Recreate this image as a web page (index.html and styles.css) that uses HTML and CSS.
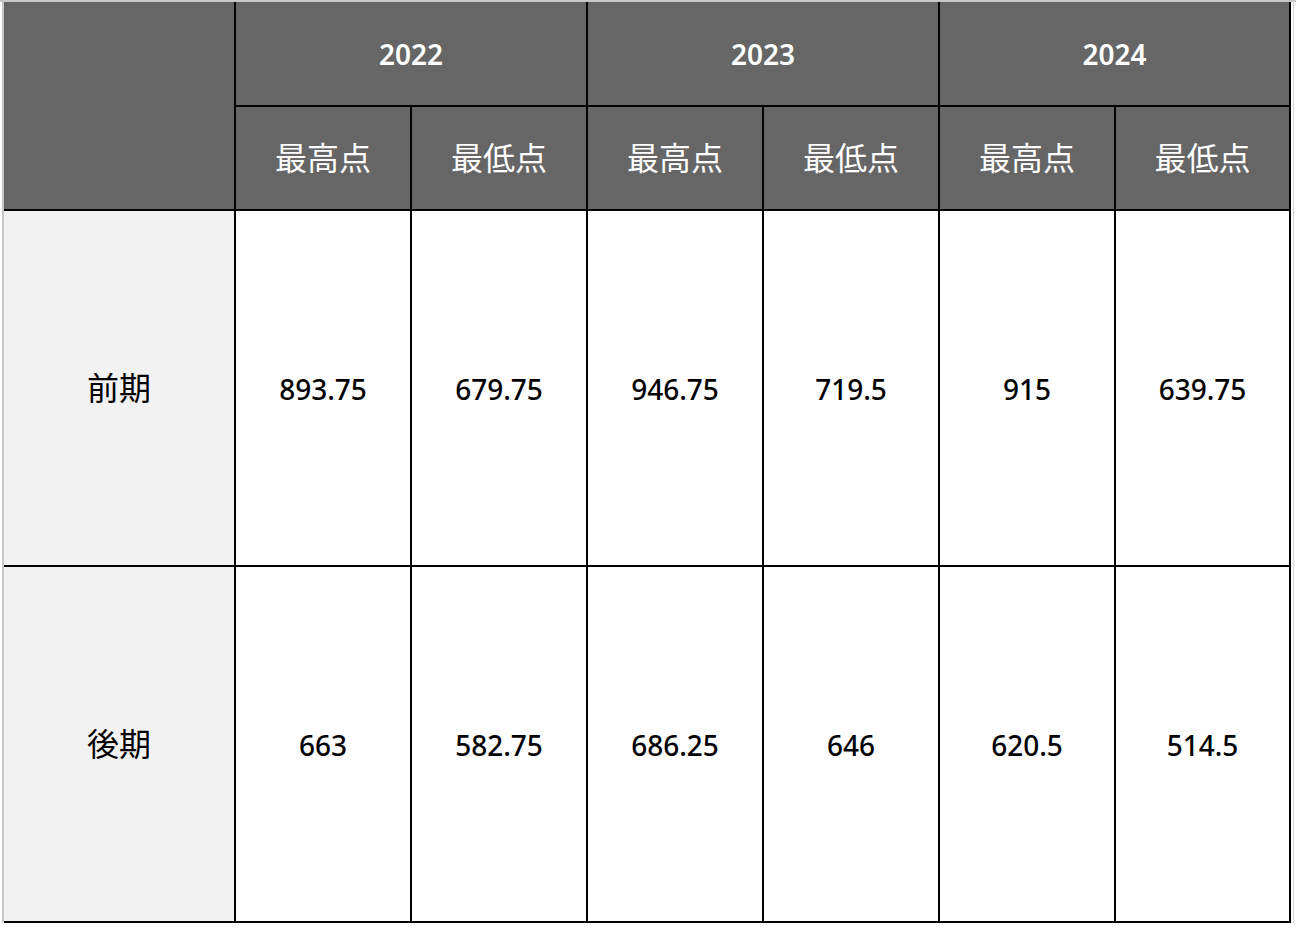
FILE: index.html
```html
<!DOCTYPE html>
<html lang="ja">
<head>
<meta charset="utf-8">
<title>最高点・最低点</title>
<link rel="stylesheet" href="styles.css">
</head>
<body>
<div class="sheet">
  <div class="frame">
    <div class="grid">
      <div class="cell head corner"></div>
      <div class="cell head year">2022</div>
      <div class="cell head year">2023</div>
      <div class="cell head year">2024</div>
      <div class="cell head sub cjk">最高点</div>
      <div class="cell head sub cjk">最低点</div>
      <div class="cell head sub cjk">最高点</div>
      <div class="cell head sub cjk">最低点</div>
      <div class="cell head sub cjk">最高点</div>
      <div class="cell head sub cjk">最低点</div>

      <div class="cell label cjk">前期</div>
      <div class="cell num">893.75</div>
      <div class="cell num">679.75</div>
      <div class="cell num">946.75</div>
      <div class="cell num">719.5</div>
      <div class="cell num">915</div>
      <div class="cell num">639.75</div>

      <div class="cell label cjk">後期</div>
      <div class="cell num">663</div>
      <div class="cell num">582.75</div>
      <div class="cell num">686.25</div>
      <div class="cell num">646</div>
      <div class="cell num">620.5</div>
      <div class="cell num">514.5</div>
    </div>
  </div>
</div>
</body>
</html>
```

FILE: styles.css
```css
html, body {
  margin: 0;
  padding: 0;
  background: #ffffff;
}

body {
  width: 1296px;
  height: 928px;
  overflow: hidden;
  font-family: "Noto Sans", "Noto Sans CJK JP", sans-serif;
}

.sheet {
  border-top: 2px solid #c8c8c8;
  padding-left: 2px;
}

.frame {
  display: inline-block;
  border-left: 2px solid #c8c8c8;
  box-shadow: 2px 0 0 #ffffff, 3px 0 0 #d6d6d6;
}

.grid {
  display: grid;
  grid-template-columns: 230px repeat(5, 174px) 173px;
  grid-template-rows: 103px 102px 354px 354px;
  gap: 2px;
  padding: 0 2px 2px 0;
  background: #000000;
}

.cell {
  display: flex;
  align-items: center;
  justify-content: center;
  background: #ffffff;
  color: #000000;
  font-size: 28px;
  line-height: 1;
}

.num {
  font-weight: 500;
  padding-top: 2px;
}

.head {
  background: #666666;
  color: #ffffff;
}

.corner {
  grid-row: 1 / 3;
}

.year {
  grid-column: span 2;
  font-weight: 600;
}

.cjk {
  font-family: "Noto Sans CJK JP", "Noto Sans", sans-serif;
  font-size: 32px;
  padding-bottom: 4px;
}

.label {
  background: #f2f2f2;
}
```
